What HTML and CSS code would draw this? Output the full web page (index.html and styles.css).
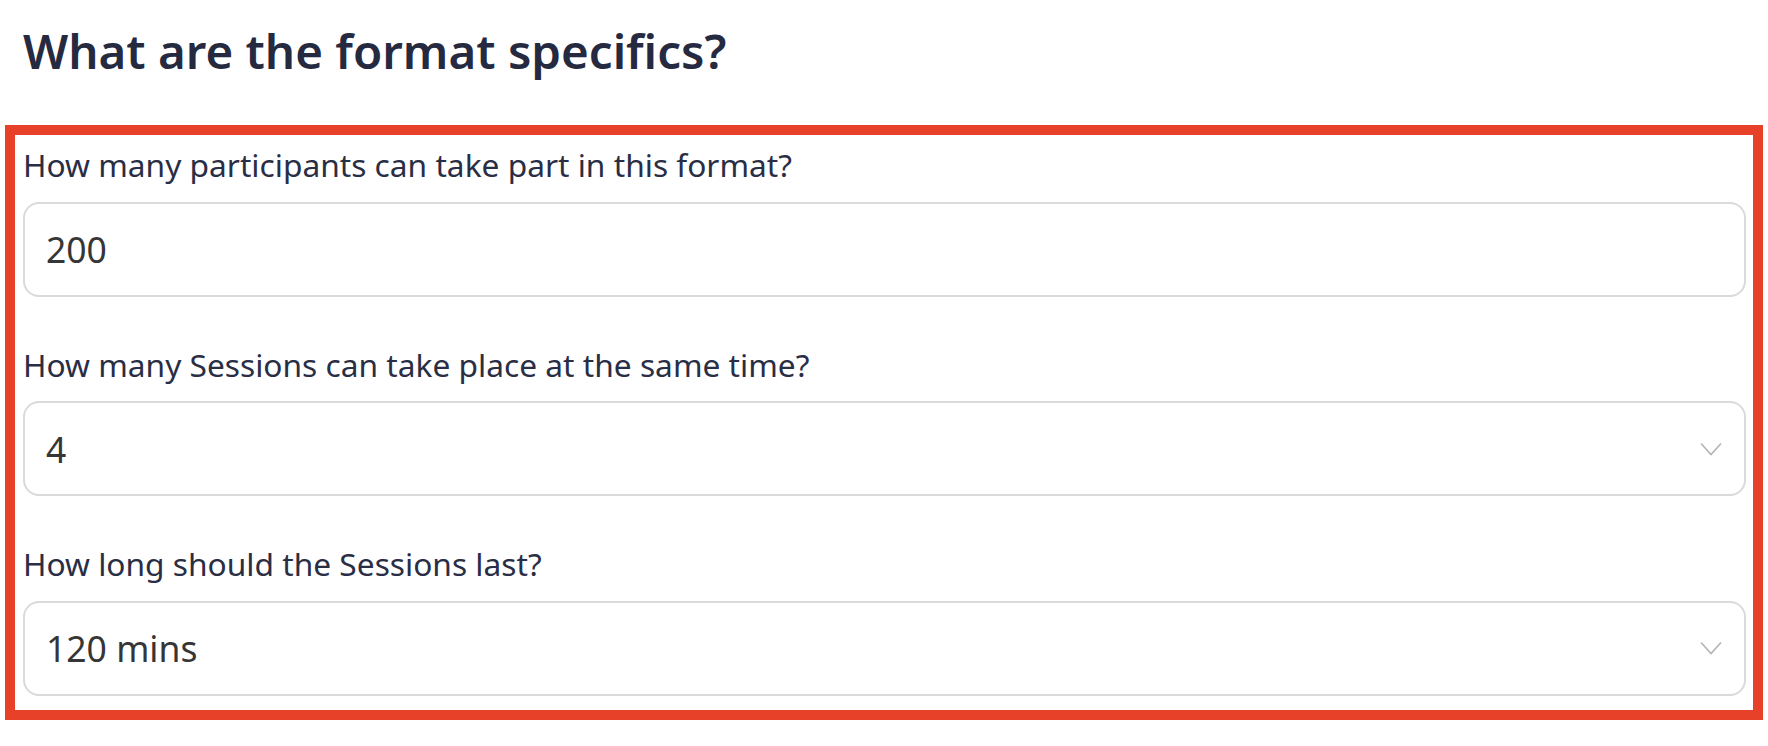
FILE: index.html
```html
<!DOCTYPE html>
<html lang="en">
<head>
<meta charset="utf-8">
<title>Format specifics</title>
<link rel="stylesheet" href="styles.css">
</head>
<body>
<main class="page">
  <h1 class="title">What are the format specifics?</h1>
  <section class="form">
    <div class="field">
      <label class="label">How many participants can take part in this format?</label>
      <div class="control"><span class="value">200</span></div>
    </div>
    <div class="field">
      <label class="label">How many Sessions can take place at the same time?</label>
      <div class="control select"><span class="value">4</span>
        <svg class="chevron" width="22" height="14" viewBox="0 0 22 14"><path d="M1 1.5 L11 12.5 L21 1.5" fill="none" stroke="#b4b4b4" stroke-width="1.6"/></svg>
      </div>
    </div>
    <div class="field">
      <label class="label">How long should the Sessions last?</label>
      <div class="control select"><span class="value">120 mins</span>
        <svg class="chevron" width="22" height="14" viewBox="0 0 22 14"><path d="M1 1.5 L11 12.5 L21 1.5" fill="none" stroke="#b4b4b4" stroke-width="1.6"/></svg>
      </div>
    </div>
  </section>
</main>
</body>
</html>
```

FILE: styles.css
```css
html, body {
  margin: 0;
  padding: 0;
  background: #ffffff;
}

.page {
  padding: 17px 5px 0 5px;
  font-family: "Noto Sans", "Open Sans", sans-serif;
}

.title {
  margin: 0 0 41px 18px;
  font-size: 47.5px;
  font-weight: 600;
  line-height: 67px;
  color: #262a40;
}

.form {
  border: 10px solid #e8412a;
  padding: 8px 7px 14px 8px;
  display: flex;
  flex-direction: column;
  gap: 46px;
}

.field {
  display: flex;
  flex-direction: column;
}

.label {
  font-size: 31.7px;
  line-height: 43.6px;
  color: #2a2e45;
  margin-bottom: 15px;
}

.control {
  height: 95px;
  box-sizing: border-box;
  border: 2px solid #dadada;
  border-radius: 16px;
  display: flex;
  align-items: center;
  justify-content: space-between;
  padding: 0 22px 0 21px;
}

.value {
  font-size: 35.5px;
  color: #363636;
}

.chevron {
  display: block;
}
```
